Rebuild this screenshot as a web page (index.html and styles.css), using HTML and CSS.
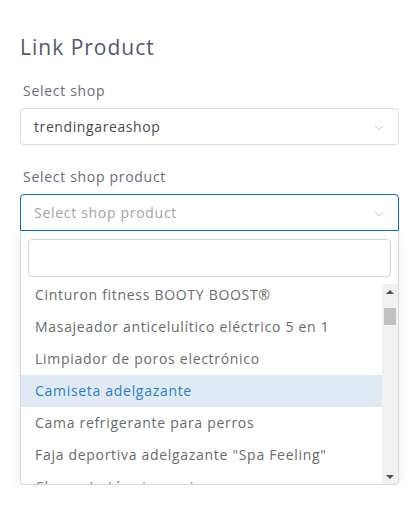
FILE: index.html
```html
<!DOCTYPE html>
<html lang="en">
  <head>
    <meta charset="UTF-8" />
    <meta name="viewport" content="width=device-width, initial-scale=1.0" />
    <title>Link Product</title>
    <link rel="stylesheet" href="styles.css">
  </head>
  <body>
    <div class="page">
      <h1 class="title">Link Product</h1>

      <label class="field-label">Select shop</label>
      <div class="select">
        <span class="select-value">trendingareashop</span>
        <svg class="chevron" width="10" height="6" viewBox="0 0 10 6"><path d="M1 1l4 4 4-4" fill="none" stroke="#c9c9cf" stroke-width="1"/></svg>
      </div>

      <label class="field-label second">Select shop product</label>
      <div class="select open">
        <span class="select-placeholder">Select shop product</span>
        <svg class="chevron" width="10" height="6" viewBox="0 0 10 6"><path d="M1 1l4 4 4-4" fill="none" stroke="#c9c9cf" stroke-width="1"/></svg>
      </div>

      <div class="dropdown">
        <div class="search-wrap">
          <input class="search" type="text" />
        </div>
        <div class="list-area">
          <ul class="options">
            <li>Cinturon fitness BOOTY BOOST®</li>
            <li>Masajeador anticelulítico eléctrico 5 en 1</li>
            <li>Limpiador de poros electrónico</li>
            <li class="active">Camiseta adelgazante</li>
            <li>Cama refrigerante para perros</li>
            <li>Faja deportiva adelgazante "Spa Feeling"</li>
            <li>Chaqueta térmica mujer</li>
          </ul>
          <!-- fake scrollbar, drawn like the default one -->
          <div class="scrollbar">
            <span class="arrow up"></span>
            <span class="thumb"></span>
            <span class="track-fill"></span>
            <span class="arrow down"></span>
          </div>
        </div>
      </div>
    </div>
  </body>
</html>
```

FILE: styles.css
```css
body {
  margin: 0;
  background: #fff;
  font-family: "Open Sans", "Liberation Sans", sans-serif;
  letter-spacing: 0.7px;
}

.page {
  padding: 33px 20px 0 20px;
}

.title {
  margin: 0 0 20px 0;
  font-size: 21px;
  line-height: 28px;
  font-weight: 400;
  letter-spacing: 1px;
  color: #555870;
}

.field-label {
  display: block;
  margin: 0 0 7px 3px;
  font-size: 14px;
  line-height: 20px;
  color: #6b6b7a;
}

.field-label.second {
  margin-top: 22px;
}

.select {
  display: flex;
  align-items: center;
  justify-content: space-between;
  height: 37px;
  box-sizing: border-box;
  padding: 0 14px 0 13px;
  border: 1px solid #dadae0;
  border-radius: 4px;
  font-size: 14px;
  color: #4a4a50;
}

.select-value {
  letter-spacing: 0.6px;
}

.select.open {
  border-color: #0c6bbf;
  border-radius: 4px 4px 0 0;
  position: relative;
  z-index: 1;
}

.select-placeholder {
  color: #a3a3a8;
}

.chevron {
  margin-top: 2px;
}

.dropdown {
  border: 1px solid #d8d8de;
  border-top: none;
  border-radius: 0 0 4px 4px;
  box-shadow: 0 4px 14px rgba(0, 0, 0, 0.07);
  background: #fff;
}

.search-wrap {
  padding: 8px 7px 7px 7px;
}

.search {
  display: block;
  width: 100%;
  height: 38px;
  box-sizing: border-box;
  border: 1px solid #d3d3d9;
  border-radius: 4px;
  outline: none;
}

.list-area {
  display: flex;
  height: 200px;
  overflow: hidden;
}

.options {
  flex: 1;
  list-style: none;
  margin: -5px 0 0 0;
  padding: 0;
}

.options li {
  height: 32px;
  line-height: 32px;
  padding-left: 14px;
  font-size: 14px;
  color: #6a6a72;
  white-space: nowrap;
}

.options li.active {
  background: #dfeaf4;
  color: #2f7ec2;
}

.scrollbar {
  width: 16px;
  display: flex;
  flex-direction: column;
  background: #f1f1f1;
}

.arrow {
  height: 15px;
  display: flex;
  align-items: center;
  justify-content: center;
}

.arrow::before {
  content: "";
  border-left: 4px solid transparent;
  border-right: 4px solid transparent;
}

.arrow.up::before {
  border-bottom: 4px solid #505050;
}

.arrow.down::before {
  border-top: 4px solid #505050;
}

.thumb {
  height: 17px;
  margin: 9px 2px 0 2px;
  background: #c1c1c1;
}

.track-fill {
  flex: 1;
}
```
